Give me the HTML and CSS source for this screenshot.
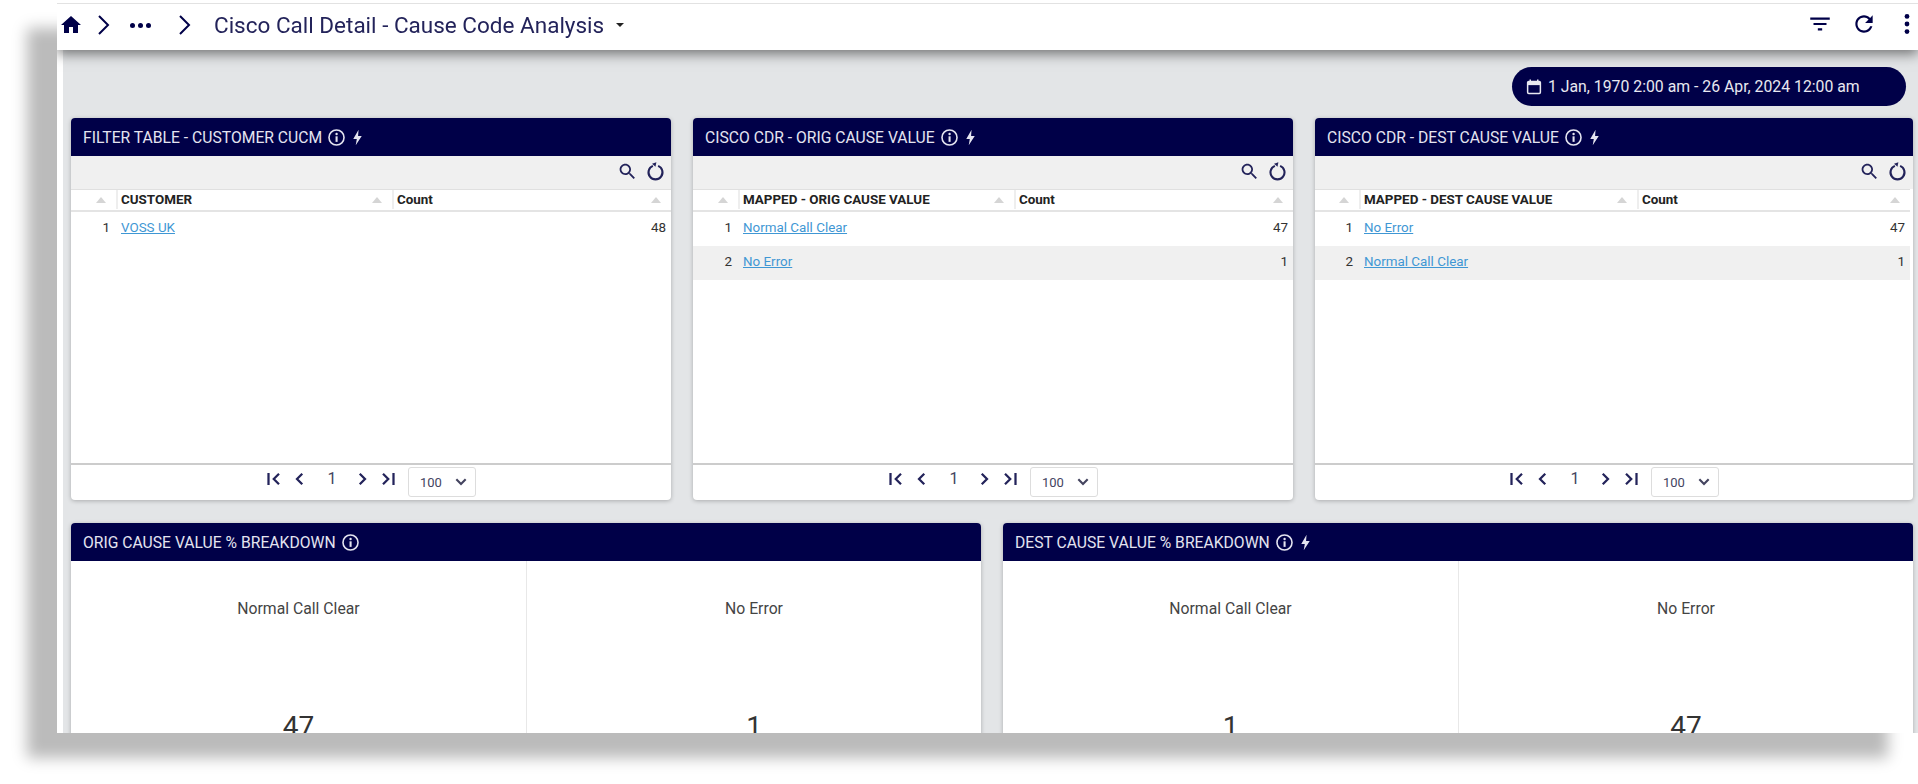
FILE: index.html
```html
<!DOCTYPE html>
<html lang="en">
<head>
<meta charset="utf-8">
<title>Cisco Call Detail - Cause Code Analysis</title>
<link rel="stylesheet" href="styles.css">
</head>
<body>
<svg class="sprite" aria-hidden="true">
  <symbol id="i-home" viewBox="0 0 24 24"><path d="M10 20v-6h4v6h5v-8h3L12 3 2 12h3v8z"/></symbol>
  <symbol id="i-chev" viewBox="0 0 24 24"><path d="M8 3l9 9-9 9" fill="none" stroke="currentColor" stroke-width="2"/></symbol>
  <symbol id="i-left" viewBox="0 0 24 24"><path d="M15 5l-7 7 7 7" fill="none" stroke="currentColor" stroke-width="3"/></symbol>
  <symbol id="i-right" viewBox="0 0 24 24"><path d="M9 5l7 7-7 7" fill="none" stroke="currentColor" stroke-width="3"/></symbol>
  <symbol id="i-first" viewBox="0 0 24 24"><path d="M20 5l-7 7 7 7" fill="none" stroke="currentColor" stroke-width="3"/><path d="M6 4v16" stroke="currentColor" stroke-width="3"/></symbol>
  <symbol id="i-last" viewBox="0 0 24 24"><path d="M4 5l7 7-7 7" fill="none" stroke="currentColor" stroke-width="3"/><path d="M18 4v16" stroke="currentColor" stroke-width="3"/></symbol>
  <symbol id="i-filter" viewBox="0 0 24 24"><path d="M10 18h4v-2h-4v2zM3 6v2h18V6H3zm3 7h12v-2H6v2z"/></symbol>
  <symbol id="i-refresh" viewBox="0 0 24 24"><path d="M17.65 6.35C16.2 4.9 14.21 4 12 4c-4.42 0-7.99 3.58-7.99 8s3.57 8 7.99 8c3.73 0 6.84-2.55 7.73-6h-2.08c-.82 2.33-3.04 4-5.65 4-3.31 0-6-2.69-6-6s2.69-6 6-6c1.66 0 3.14.69 4.22 1.78L13 11h7V4l-2.35 2.35z"/></symbol>
  <symbol id="i-more" viewBox="0 0 24 24"><circle cx="12" cy="5" r="2.2"/><circle cx="12" cy="12" r="2.2"/><circle cx="12" cy="19" r="2.2"/></symbol>
  <symbol id="i-search" viewBox="0 0 24 24"><path d="M15.5 14h-.79l-.28-.27C15.41 12.59 16 11.11 16 9.5 16 5.91 13.09 3 9.5 3S3 5.91 3 9.5 5.91 16 9.5 16c1.61 0 3.09-.59 4.23-1.57l.27.28v.79l5 4.99L20.49 19l-4.99-5zm-6 0C7.01 14 5 11.99 5 9.5S7.01 5 9.5 5 14 7.01 14 9.5 11.99 14 9.5 14z"/></symbol>
  <symbol id="i-reset" viewBox="0 0 24 24"><path d="M9 5.6a8 8 0 1 0 6 0" fill="none" stroke="currentColor" stroke-width="2.4"/><path d="M12 6.5L8 3l5-1.5z"/></symbol>
  <symbol id="i-info" viewBox="0 0 24 24"><circle cx="12" cy="12" r="9.5" fill="none" stroke="currentColor" stroke-width="2"/><rect x="10.8" y="10.5" width="2.6" height="7"/><circle cx="12.1" cy="7.6" r="1.5"/></symbol>
  <symbol id="i-bolt" viewBox="0 0 24 24"><path d="M13.5 1L6 14h5l-1.5 9L18 10h-5.2z"/></symbol>
  <symbol id="i-cal" viewBox="0 0 24 24"><path d="M7 2v3M17 2v3" stroke="currentColor" stroke-width="2"/><rect x="3.5" y="4.5" width="17" height="16" rx="1.5" fill="none" stroke="currentColor" stroke-width="2"/><rect x="4" y="5" width="16" height="4.5"/></symbol>
  <symbol id="i-down" viewBox="0 0 24 24"><path d="M5 8l7 7 7-7" fill="none" stroke="currentColor" stroke-width="3.2"/></symbol>
</svg>

<div class="window">
  <header class="topbar">
    <svg class="ic home"><use href="#i-home"/></svg>
    <svg class="ic chev first-chev"><use href="#i-chev"/></svg>
    <span class="crumb-dots"><i></i><i></i><i></i></span>
    <svg class="ic chev second-chev"><use href="#i-chev"/></svg>
    <h1 class="title">Cisco Call Detail - Cause Code Analysis</h1>
    <span class="caret"></span>
    <div class="top-actions">
      <svg class="ic act filter"><use href="#i-filter"/></svg>
      <svg class="ic act refresh"><use href="#i-refresh"/></svg>
      <svg class="ic act more"><use href="#i-more"/></svg>
    </div>
  </header>

  <main class="main">
    <div class="date-row">
      <div class="date-pill">
        <svg class="ic cal"><use href="#i-cal"/></svg>
        <span>1 Jan, 1970 2:00 am - 26 Apr, 2024 12:00 am</span>
      </div>
    </div>

    <section class="row-tables">
      <article class="card">
        <div class="card-head"><span>FILTER TABLE - CUSTOMER CUCM</span><svg class="ic info"><use href="#i-info"/></svg><svg class="ic bolt"><use href="#i-bolt"/></svg></div>
        <div class="toolbar"><svg class="ic tool"><use href="#i-search"/></svg><svg class="ic tool"><use href="#i-reset"/></svg></div>
        <div class="tbl">
          <div class="tr th"><div class="c-idx"></div><div class="c-name">CUSTOMER</div><div class="c-count">Count</div></div>
          <div class="tr"><div class="c-idx">1</div><div class="c-name"><a href="#">VOSS UK</a></div><div class="c-count">48</div></div>
        </div>
        <div class="pager">
          <svg class="ic pg p-first"><use href="#i-first"/></svg>
          <svg class="ic pg p-prev"><use href="#i-left"/></svg>
          <span class="p-num">1</span>
          <svg class="ic pg p-next"><use href="#i-right"/></svg>
          <svg class="ic pg p-last"><use href="#i-last"/></svg>
          <div class="p-size"><span>100</span><svg class="ic down"><use href="#i-down"/></svg></div>
        </div>
      </article>

      <article class="card">
        <div class="card-head"><span>CISCO CDR - ORIG CAUSE VALUE</span><svg class="ic info"><use href="#i-info"/></svg><svg class="ic bolt"><use href="#i-bolt"/></svg></div>
        <div class="toolbar"><svg class="ic tool"><use href="#i-search"/></svg><svg class="ic tool"><use href="#i-reset"/></svg></div>
        <div class="tbl">
          <div class="tr th"><div class="c-idx"></div><div class="c-name">MAPPED - ORIG CAUSE VALUE</div><div class="c-count">Count</div></div>
          <div class="tr"><div class="c-idx">1</div><div class="c-name"><a href="#">Normal Call Clear</a></div><div class="c-count">47</div></div>
          <div class="tr alt"><div class="c-idx">2</div><div class="c-name"><a href="#">No Error</a></div><div class="c-count">1</div></div>
        </div>
        <div class="pager">
          <svg class="ic pg p-first"><use href="#i-first"/></svg>
          <svg class="ic pg p-prev"><use href="#i-left"/></svg>
          <span class="p-num">1</span>
          <svg class="ic pg p-next"><use href="#i-right"/></svg>
          <svg class="ic pg p-last"><use href="#i-last"/></svg>
          <div class="p-size"><span>100</span><svg class="ic down"><use href="#i-down"/></svg></div>
        </div>
      </article>

      <article class="card">
        <div class="card-head"><span>CISCO CDR - DEST CAUSE VALUE</span><svg class="ic info"><use href="#i-info"/></svg><svg class="ic bolt"><use href="#i-bolt"/></svg></div>
        <div class="toolbar"><svg class="ic tool"><use href="#i-search"/></svg><svg class="ic tool"><use href="#i-reset"/></svg></div>
        <div class="tbl tbl-inset">
          <div class="tr th"><div class="c-idx"></div><div class="c-name">MAPPED - DEST CAUSE VALUE</div><div class="c-count">Count</div></div>
          <div class="tr"><div class="c-idx">1</div><div class="c-name"><a href="#">No Error</a></div><div class="c-count">47</div></div>
          <div class="tr alt"><div class="c-idx">2</div><div class="c-name"><a href="#">Normal Call Clear</a></div><div class="c-count">1</div></div>
        </div>
        <div class="pager">
          <svg class="ic pg p-first"><use href="#i-first"/></svg>
          <svg class="ic pg p-prev"><use href="#i-left"/></svg>
          <span class="p-num">1</span>
          <svg class="ic pg p-next"><use href="#i-right"/></svg>
          <svg class="ic pg p-last"><use href="#i-last"/></svg>
          <div class="p-size"><span>100</span><svg class="ic down"><use href="#i-down"/></svg></div>
        </div>
      </article>
    </section>

    <section class="row-metrics">
      <article class="card card-metric">
        <div class="card-head"><span>ORIG CAUSE VALUE % BREAKDOWN</span><svg class="ic info"><use href="#i-info"/></svg></div>
        <div class="metrics">
          <div class="metric"><div class="m-label">Normal Call Clear</div><div class="m-value">47</div></div>
          <div class="metric"><div class="m-label">No Error</div><div class="m-value">1</div></div>
        </div>
      </article>
      <article class="card card-metric">
        <div class="card-head"><span>DEST CAUSE VALUE % BREAKDOWN</span><svg class="ic info"><use href="#i-info"/></svg><svg class="ic bolt"><use href="#i-bolt"/></svg></div>
        <div class="metrics">
          <div class="metric"><div class="m-label">Normal Call Clear</div><div class="m-value">1</div></div>
          <div class="metric"><div class="m-label">No Error</div><div class="m-value">47</div></div>
        </div>
      </article>
    </section>
  </main>
</div>
</body>
</html>
```

FILE: styles.css
```css
* { box-sizing: border-box; }
html, body { margin: 0; height: 784px; overflow: hidden; background: #fff; }
body { font-family: Roboto, "Liberation Sans", sans-serif; color: #333; }
.sprite { width: 0; height: 0; display: block; overflow: hidden; }
.ic { display: block; fill: currentColor; flex: none; }

.window {
  margin: 3px 0 0 57px;
  width: 1861px;
  height: 730px;
  display: flex;
  flex-direction: column;
  background: #fff;
  box-shadow: -30px 25px 14px #bbb;
  overflow: hidden;
  filter: blur(0.35px);
}

.topbar {
  position: relative;
  z-index: 2;
  height: 47px;
  flex: none;
  display: flex;
  align-items: center;
  padding-bottom: 4px;
  background: #fff;
  border-top: 1px solid #e2e2e2;
  box-shadow: 0 4px 12px rgba(0, 0, 0, .5);
  color: #000048;
}
.home { width: 24px; height: 24px; margin-left: 2px; }
.chev { width: 24px; height: 24px; }
.first-chev { margin-left: 8px; }
.crumb-dots { display: flex; gap: 3px; margin-left: 15px; }
.crumb-dots i { width: 5px; height: 5px; border-radius: 50%; background: #000048; }
.second-chev { margin-left: 21px; }
.title {
  margin: 0 0 0 18px;
  font-size: 22.5px;
  font-weight: 400;
  color: #23235a;
  white-space: nowrap;
}
.caret {
  margin-left: 12px;
  width: 0; height: 0;
  border: 4px solid transparent;
  border-top-color: #222;
  border-bottom-width: 0;
}
.top-actions { margin-left: auto; margin-bottom: 3px; display: flex; align-items: center; color: #000048; }
.act { width: 26px; height: 26px; }
.filter { margin-right: 18px; }
.refresh { margin-right: 17px; }
.more { margin-right: -2px; }

.main {
  flex: 1;
  min-height: 0;
  margin-left: 6px;
  padding: 17px 3px 0 8px;
  background: #e3e5e7;
  overflow: hidden;
  display: flex;
  flex-direction: column;
}

.date-row { display: flex; justify-content: flex-end; padding-right: 9px; margin-bottom: 12px; flex: none; }
.date-pill {
  width: 394px;
  height: 39px;
  border-radius: 20px;
  background: #000048;
  color: #e8e8f0;
  display: flex;
  align-items: center;
  padding-left: 13px;
  font-size: 15.8px;
  gap: 5px;
  white-space: nowrap;
}
.cal { width: 18px; height: 18px; }

.row-tables { display: grid; grid-template-columns: 600px 600px 598px; column-gap: 22px; height: 382px; flex: none; }
.row-metrics { display: grid; grid-template-columns: 910px 910px; column-gap: 22px; margin-top: 23px; flex: none; height: 300px; }

.card {
  display: flex;
  flex-direction: column;
  background: #fff;
  border-radius: 4px;
  box-shadow: 0 1px 4px rgba(0, 0, 0, .25);
  overflow: hidden;
}
.card-head {
  height: 38px;
  flex: none;
  background: #000048;
  color: #e4e4f0;
  display: flex;
  align-items: center;
  padding-left: 12px;
  font-size: 15.7px;
  white-space: nowrap;
}
.info { width: 19px; height: 19px; margin-left: 5px; }
.bolt { width: 17px; height: 21px; margin-left: 3px; }

.toolbar {
  height: 33px;
  flex: none;
  background: #f0f0f0;
  display: flex;
  justify-content: flex-end;
  align-items: center;
  color: #23235a;
  gap: 7px;
  padding: 0 5px 2px 0;
}
.tool { width: 21px; height: 21px; }

.tbl { flex: 1; min-height: 0; }
.tr { display: grid; grid-template-columns: 45px 276px 279px; height: 34px; align-items: center; padding-bottom: 3px; font-size: 13.4px; color: #333; }
.tr.alt { background: #f0f0f0; }
.tbl-inset .tr { margin-right: 3px; grid-template-columns: 44px 278px 273px; }
.c-idx { text-align: right; padding-right: 6px; }
.c-name { padding-left: 5px; }
.c-count { text-align: right; padding-right: 5px; }
a { color: #3f97d4; }

.th {
  position: relative;
  height: 23px;
  padding-bottom: 1px;
  background: #fff;
  border-top: 1px solid #e0e0e0;
  border-bottom: 2px solid #e4e4e4;
  font-weight: 700;
  font-size: 13.4px;
  color: #222;
  align-items: stretch;
}
.th > div { position: relative; display: flex; align-items: center; }
.th .c-name, .th .c-count { border-left: 2px solid #eee; padding-left: 3px; padding-right: 0; }
.th > div::after {
  content: "";
  position: absolute;
  right: 10px;
  top: 7px;
  border: 5px solid transparent;
  border-top-width: 0;
  border-bottom: 6px solid #d5d5d5;
}

.pager {
  height: 37px;
  flex: none;
  border-top: 2px solid #ccc;
  display: flex;
  justify-content: center;
  align-items: flex-start;
  padding: 2px 2px 0 0;
  color: #23235a;
}
.pg { width: 18px; height: 18px; margin-top: 3px; }
.p-first { margin-right: 9px; }
.p-prev { margin-right: 8px; }
.p-num { width: 30px; text-align: center; font-size: 16px; line-height: 24px; color: #44445f; }
.p-next { margin-left: 6px; margin-right: 9px; }
.p-last { margin-right: 10px; }
.p-size {
  width: 68px;
  height: 30px;
  border: 1px solid #ddd;
  border-radius: 3px;
  background: #fff;
  display: flex;
  align-items: center;
  justify-content: space-between;
  padding: 0 6px 0 11px;
  font-size: 13px;
  color: #44445f;
}
.down { width: 16px; height: 16px; }

.card-metric { border-radius: 4px 4px 0 0; }
.metrics { flex: 1; display: grid; grid-template-columns: 1fr 1fr; }
.metric { text-align: center; padding-top: 39px; }
.metric + .metric { border-left: 1px solid #e8e8e8; }
.m-label { font-size: 15.75px; line-height: 18px; color: #444; }
.m-value { margin-top: 92px; font-size: 28px; line-height: 34px; color: #333; }
```
